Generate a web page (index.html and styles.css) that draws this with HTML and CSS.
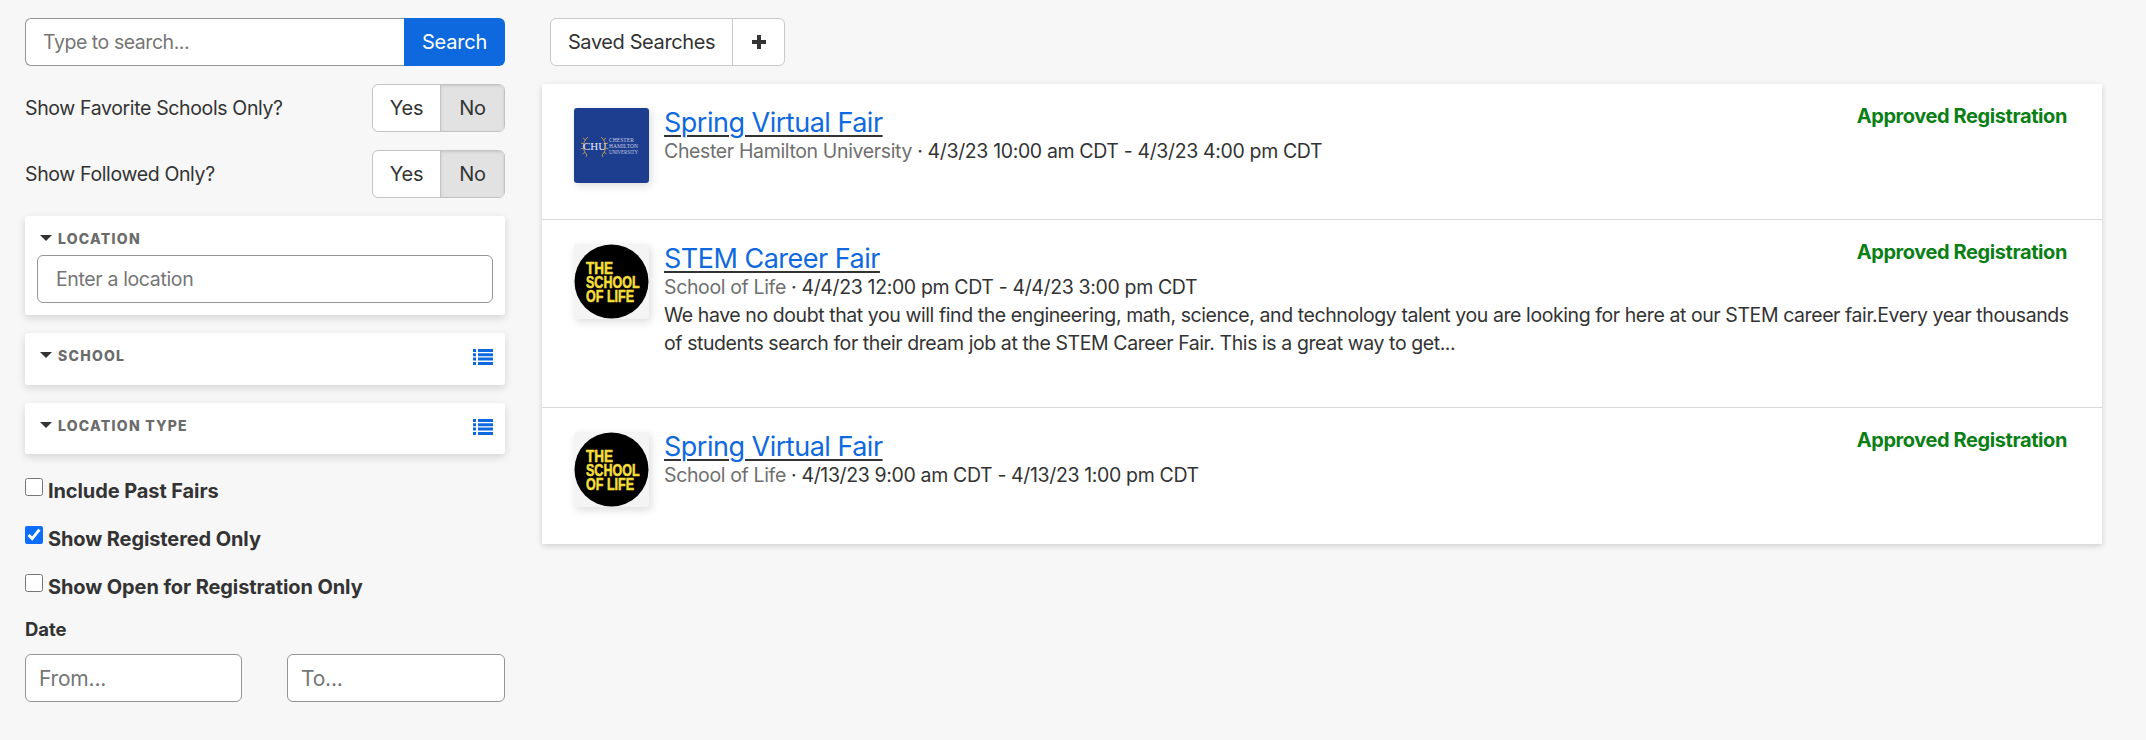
FILE: index.html
```html
<!DOCTYPE html>
<html lang="en">
<head>
<meta charset="utf-8">
<title>Fairs</title>
<link rel="stylesheet" href="styles.css">
</head>
<body>
<div class="page">
  <aside class="sidebar">
    <div class="search-group">
      <input class="field search-input" type="text" placeholder="Type to search...">
      <button class="search-btn" type="button">Search</button>
    </div>
    <div class="toggle-row">
      <span>Show Favorite Schools Only?</span>
      <div class="toggle"><span class="toggle-yes">Yes</span><span class="toggle-no">No</span></div>
    </div>
    <div class="toggle-row">
      <span>Show Followed Only?</span>
      <div class="toggle"><span class="toggle-yes">Yes</span><span class="toggle-no">No</span></div>
    </div>
    <section class="panel panel-location">
      <div class="panel-head"><span class="caret"></span><span class="panel-title">Location</span></div>
      <input class="field location-input" type="text" placeholder="Enter a location">
    </section>
    <section class="panel panel-school">
      <div class="panel-head">
        <span class="caret"></span><span class="panel-title">School</span>
        <svg class="list-icon" viewBox="0 0 20 16" width="20" height="16"><path d="M0 0h3v3H0zM5 0h15v3H5zM0 4.300h3v3H0zM5 4.300h15v3H5zM0 8.600h3v3H0zM5 8.600h15v3H5zM0 13h3v3H0zM5 13h15v3H5z"/></svg>
      </div>
    </section>
    <section class="panel panel-type">
      <div class="panel-head">
        <span class="caret"></span><span class="panel-title">Location Type</span>
        <svg class="list-icon" viewBox="0 0 20 16" width="20" height="16"><path d="M0 0h3v3H0zM5 0h15v3H5zM0 4.300h3v3H0zM5 4.300h15v3H5zM0 8.600h3v3H0zM5 8.600h15v3H5zM0 13h3v3H0zM5 13h15v3H5z"/></svg>
      </div>
    </section>
    <label class="check check-first"><input type="checkbox"><span>Include Past Fairs</span></label>
    <label class="check"><input type="checkbox" checked><span>Show Registered Only</span></label>
    <label class="check"><input type="checkbox"><span>Show Open for Registration Only</span></label>
    <div class="date-label">Date</div>
    <div class="date-row">
      <input class="field date-input" type="text" placeholder="From...">
      <input class="field date-input" type="text" placeholder="To...">
    </div>
  </aside>
  <main class="main">
    <div class="saved">
      <span class="saved-label">Saved Searches</span>
      <span class="saved-add"><svg viewBox="0 0 16 16" width="16" height="16"><path d="M6 1h4v5h5v4h-5v5H6v-5H1V6h5z"/></svg></span>
    </div>
    <div class="list">
      <article class="fair fair-short">
        <div class="logo logo-chu">
          <svg viewBox="0 0 75 75" width="75" height="75">
            <g class="laurel">
              <path d="M14 29c-6 5-6 13-1 18M11.500 32l-2.500-2M10 36l-3-1M9.500 40l-3 1M11 44l-2.500 2M13 47l-1 2"/>
              <path d="M27 29c6 5 6 13 1 18M29.500 32l2.500-2M31 36l3-1M31.500 40l3 1M30 44l2.500 2M28 47l1 2"/>
            </g>
            <text class="chu-mark" x="20.500" y="42" text-anchor="middle">CHU</text>
            <text class="chu-name" x="35" y="34" textLength="25" lengthAdjust="spacingAndGlyphs">CHESTER</text>
            <text class="chu-name" x="35" y="40" textLength="29" lengthAdjust="spacingAndGlyphs">HAMILTON</text>
            <text class="chu-name" x="35" y="46" textLength="29" lengthAdjust="spacingAndGlyphs">UNIVERSITY</text>
          </svg>
        </div>
        <div class="fair-body">
          <a class="fair-title" href="#">Spring Virtual Fair</a>
          <div class="fair-meta"><span class="school">Chester Hamilton University</span> · 4/3/23 10:00 am CDT - 4/3/23 4:00 pm CDT</div>
        </div>
        <div class="status">Approved Registration</div>
      </article>
      <article class="fair fair-tall">
        <div class="logo logo-life">
          <svg viewBox="0 0 75 75" width="75" height="75">
            <circle cx="37.500" cy="37.500" r="37"/>
            <text transform="translate(12 30) scale(.82 1)">THE</text>
            <text transform="translate(12 44) scale(.76 1)">SCHOOL</text>
            <text transform="translate(12 57.500) scale(.76 1)">OF LIFE</text>
          </svg>
        </div>
        <div class="fair-body">
          <a class="fair-title" href="#">STEM Career Fair</a>
          <div class="fair-meta"><span class="school">School of Life</span> · 4/4/23 12:00 pm CDT - 4/4/23 3:00 pm CDT</div>
          <p class="fair-desc">We have no doubt that you will find the engineering, math, science, and technology talent you are looking for here at our STEM career fair.Every year thousands of students search for their dream job at the STEM Career Fair. This is a great way to get...</p>
        </div>
        <div class="status">Approved Registration</div>
      </article>
      <article class="fair fair-short">
        <div class="logo logo-life">
          <svg viewBox="0 0 75 75" width="75" height="75">
            <circle cx="37.500" cy="37.500" r="37"/>
            <text transform="translate(12 30) scale(.82 1)">THE</text>
            <text transform="translate(12 44) scale(.76 1)">SCHOOL</text>
            <text transform="translate(12 57.500) scale(.76 1)">OF LIFE</text>
          </svg>
        </div>
        <div class="fair-body">
          <a class="fair-title" href="#">Spring Virtual Fair</a>
          <div class="fair-meta"><span class="school">School of Life</span> · 4/13/23 9:00 am CDT - 4/13/23 1:00 pm CDT</div>
        </div>
        <div class="status">Approved Registration</div>
      </article>
    </div>
  </main>
</div>
</body>
</html>
```
FILE: styles.css
```css
* { box-sizing: border-box; }
html, body { margin: 0; height: 100%; }
body {
  background: #f7f7f7;
  color: #333;
  font-family: Inter, "Liberation Sans", sans-serif;
  font-size: 19.500px;
  line-height: 28px;
  letter-spacing: -0.36px;
  overflow: hidden;
}
.page { display: flex; align-items: flex-start; padding: 18px 0 0 25px; }
.sidebar { width: 480px; flex: none; }
.main { width: 1560px; margin-left: 37px; flex: none; }

.field {
  height: 48px;
  background: #fff;
  border: 1px solid #949494;
  border-radius: 6px;
  font: inherit;
  letter-spacing: inherit;
  color: #333;
  outline: none;
}
.field::placeholder { color: #757575; opacity: 1; }

.search-group { display: flex; height: 48px; }
.search-input { flex: 1; min-width: 0; padding: 0 17px; border-radius: 6px 0 0 6px; border-right: 0; letter-spacing: -0.45px; }
.search-btn {
  width: 101px;
  height: 48px;
  padding: 0;
  background: #0f69de;
  border: 0;
  border-radius: 0 6px 6px 0;
  color: #fff;
  font: inherit;
  font-size: 20px;
  letter-spacing: -0.2px;
}

.toggle-row { display: flex; align-items: center; justify-content: space-between; height: 48px; margin-top: 18px; }
.toggle {
  display: flex;
  width: 133px;
  height: 48px;
  background: #fff;
  border: 1px solid #c4c4c4;
  border-radius: 6px;
  overflow: hidden;
  font-size: 20px;
  letter-spacing: -0.2px;
}
.toggle span { display: flex; align-items: center; justify-content: center; }
.toggle-yes { width: 68px; border-right: 1px solid #c4c4c4; }
.toggle-no { flex: 1; background: #e2e2e2; box-shadow: inset 0 1px 3px rgba(0,0,0,.12); }

.panel {
  background: #fff;
  border-radius: 3px;
  box-shadow: 0 3px 8px rgba(0,0,0,.14);
  padding: 13px 12px 0;
}
.panel-location { height: 99px; margin-top: 18px; }
.panel-school { height: 52px; margin-top: 18px; }
.panel-type { height: 51px; margin-top: 18px; }
.panel-head { display: flex; align-items: center; height: 20px; position: relative; }
.caret {
  width: 0; height: 0;
  margin: -3px 6px 0 3px;
  border-left: 6px solid transparent;
  border-right: 6px solid transparent;
  border-top: 6px solid #333;
}
.panel-title {
  color: #6b6b6b;
  font-size: 14px;
  font-weight: 800;
  letter-spacing: 1.25px;
  text-transform: uppercase;
}
.list-icon { margin-left: auto; margin-top: 2px; fill: #0f69de; }
.location-input { display: block; width: 100%; margin-top: 6px; padding: 0 18px; }

.check { display: flex; align-items: flex-start; height: 28px; font-size: 20px; font-weight: 700; margin-top: 20px; letter-spacing: -0.1px; }
.check-first { margin-top: 23px; }
.check input { width: 18px; height: 18px; margin: 1px 5px 0 0; flex: none; accent-color: #0d6efd; }
.date-label { font-weight: 700; font-size: 18.500px; letter-spacing: -0.1px; margin-top: 14px; height: 28px; }
.date-row { display: flex; justify-content: space-between; margin-top: 11px; }
.date-input { width: 217px; padding: 0 13px; font-size: 21px; letter-spacing: -0.2px; }
.date-input:last-child { width: 218px; }

.saved {
  display: inline-flex;
  height: 48px;
  margin-left: 8px;
  background: #fff;
  border: 1px solid #c9c9c9;
  border-radius: 6px;
  vertical-align: top;
  font-size: 20px;
  letter-spacing: -0.4px;
}
.saved-label { width: 182px; display: flex; align-items: center; justify-content: center; border-right: 1px solid #c9c9c9; }
.saved-add { width: 51px; display: flex; align-items: center; justify-content: center; }
.saved-add svg { fill: #333; }

.list { margin-top: 18px; background: #fff; box-shadow: 0 2px 6px rgba(0,0,0,.16); }
.fair { position: relative; display: flex; align-items: flex-start; padding: 24px 35px 0 32px; border-bottom: 1px solid #d9d9d9; }
.fair:last-child { border-bottom: 0; }
.fair-short { height: 136px; }
.fair-tall { height: 188px; }
.logo { width: 75px; height: 75px; flex: none; border-radius: 3px; box-shadow: 2px 3px 8px rgba(0,0,0,.14); overflow: hidden; }
.logo svg { display: block; }
.logo-chu { background: #1d3d8f; }
.logo-life { background: #f4f4f4; }
.logo-life circle { fill: #000; }
.logo-life text { fill: #f5df3c; stroke: #f5df3c; stroke-width: .6px; font-family: "Liberation Sans", sans-serif; font-size: 16.500px; font-weight: 700; letter-spacing: 0; }
.laurel { fill: none; stroke: #b4975a; stroke-width: 1; }
.chu-mark { fill: #e8ebf4; font-family: "Liberation Serif", serif; font-size: 11px; letter-spacing: 0; }
.chu-name { fill: #c5cde2; font-family: "Liberation Serif", serif; font-size: 5.500px; letter-spacing: 0; }
.fair-body { flex: 1; min-width: 0; margin-left: 15px; }
.fair-title { display: block; width: max-content; color: #0f69de; font-size: 27px; line-height: 29px; letter-spacing: -0.5px; text-decoration-color: #333; text-decoration-thickness: 2px; text-underline-offset: 3px; }
.school { color: #6f6f6f; }
.fair-desc { margin: 0; width: 1410px; letter-spacing: -0.42px; }
.status { position: absolute; top: 18px; right: 35px; color: #0b7f16; font-size: 20px; font-weight: 700; letter-spacing: -0.41px; }
```
